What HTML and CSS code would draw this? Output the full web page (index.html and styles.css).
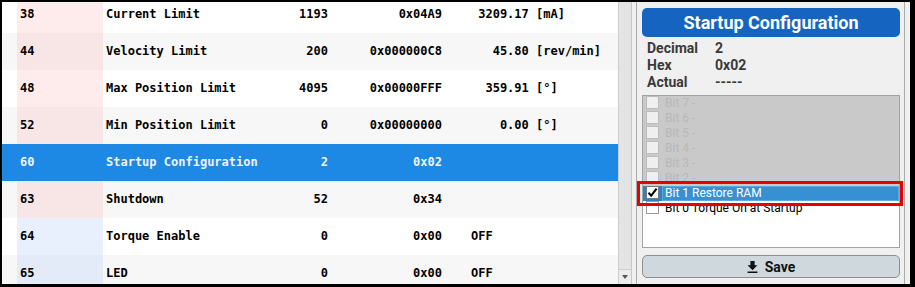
FILE: index.html
```html
<!DOCTYPE html>
<html>
<head>
<meta charset="utf-8">
<link rel="stylesheet" href="styles.css">
</head>
<body>
<div class="frame">
  <div class="table-pane">
    <div class="rows">
      <div class="row"><span></span><span class="addr red">38</span><span class="name">Current Limit</span><span class="dec">1193</span><span class="hex">0x04A9</span><span class="val"> 3209.17 [mA]</span></div>
      <div class="row alt"><span></span><span class="addr red">44</span><span class="name">Velocity Limit</span><span class="dec">200</span><span class="hex">0x000000C8</span><span class="val">   45.80 [rev/min]</span></div>
      <div class="row"><span></span><span class="addr red">48</span><span class="name">Max Position Limit</span><span class="dec">4095</span><span class="hex">0x00000FFF</span><span class="val">  359.91 [°]</span></div>
      <div class="row alt"><span></span><span class="addr red">52</span><span class="name">Min Position Limit</span><span class="dec">0</span><span class="hex">0x00000000</span><span class="val">    0.00 [°]</span></div>
      <div class="row sel"><span></span><span class="addr">60</span><span class="name">Startup Configuration</span><span class="dec">2</span><span class="hex">0x02</span><span class="val"></span></div>
      <div class="row alt"><span></span><span class="addr red">63</span><span class="name">Shutdown</span><span class="dec">52</span><span class="hex">0x34</span><span class="val"></span></div>
      <div class="row"><span></span><span class="addr blue">64</span><span class="name">Torque Enable</span><span class="dec">0</span><span class="hex">0x00</span><span class="val">OFF</span></div>
      <div class="row alt"><span></span><span class="addr blue">65</span><span class="name">LED</span><span class="dec">0</span><span class="hex">0x00</span><span class="val">OFF</span></div>
    </div>
  </div>
  <div class="vscroll">
    <div class="track"></div>
    <div class="arrow-btn"><span class="tri"></span></div>
  </div>
  <div class="gap"></div>
  <div class="panel">
    <div class="title">Startup Configuration</div>
    <div class="info">
      <span>Decimal</span><span>2</span>
      <span>Hex</span><span>0x02</span>
      <span>Actual</span><span>-----</span>
    </div>
    <div class="bits">
      <div class="bit dis"><span class="cb"></span><span class="lbl">Bit 7 -</span></div>
      <div class="bit dis"><span class="cb"></span><span class="lbl">Bit 6 -</span></div>
      <div class="bit dis"><span class="cb"></span><span class="lbl">Bit 5 -</span></div>
      <div class="bit dis"><span class="cb"></span><span class="lbl">Bit 4 -</span></div>
      <div class="bit dis"><span class="cb"></span><span class="lbl">Bit 3 -</span></div>
      <div class="bit dis"><span class="cb"></span><span class="lbl">Bit 2 -</span></div>
      <div class="bit on"><span class="cb checked"><svg width="11" height="11" viewBox="0 0 11 11"><path d="M1.5 5.8 L4.2 8.6 L9.6 1.6" fill="none" stroke="#000" stroke-width="2"/></svg></span><span class="lbl">Bit 1 Restore RAM</span></div>
      <div class="bit"><span class="cb"></span><span class="lbl">Bit 0 Torque On at Startup</span></div>
    </div>
    <button class="save"><svg width="11" height="12" viewBox="5 3 14 17"><path d="M19 9h-4V3H9v6H5l7 7 7-7zM5 18v2h14v-2H5z" fill="#111"/></svg><span>Save</span></button>
    <div class="redbox"></div>
  </div>
</div>
</body>
</html>
```
FILE: styles.css
```css
html, body { margin: 0; padding: 0; }
body { width: 915px; height: 287px; overflow: hidden; background: #000; }

.frame {
  box-sizing: border-box;
  width: 915px;
  height: 287px;
  border-style: solid;
  border-color: #000;
  border-width: 2px 5px 3px 2px;
  background: #f0f0f0;
  display: flex;
}

.table-pane {
  width: 616px;
  flex: none;
  overflow: hidden;
  background: #fff;
}
.rows { margin-top: -6px; }
.row {
  display: grid;
  grid-template-columns: 15px 86px 165px 63px 137px 1fr;
  height: 37px;
  line-height: 37px;
  font-family: "DejaVu Sans Mono", monospace;
  font-weight: bold;
  font-size: 12px;
  color: #000;
  background: #fff;
  white-space: pre;
}
.row.alt { background: #f7f7f7; }
.row span { overflow: hidden; }
.addr { padding-left: 3px; }
.addr.red { background: #fdeceb; }
.row.alt .addr.red { background: #f8e5e5; }
.addr.blue { background: #e9f0fd; }
.row.alt .addr.blue { background: #e3eaf8; }
.name { padding-left: 3px; }
.dec { text-align: right; padding-right: 3px; }
.hex { text-align: right; padding-right: 26px; }
.val { padding-left: 3px; }
.row.sel { background: #1e88e5; color: #eef4fa; }

.vscroll {
  box-sizing: border-box;
  width: 14px;
  flex: none;
  display: flex;
  flex-direction: column;
  border-left: 1px solid #cdcdcd;
  border-right: 1px solid #c6c6c6;
  background: #e4e4e4;
}
.track { flex: 1; }
.arrow-btn {
  height: 14px;
  border-top: 1px solid #cfcfcf;
  background: #ececec;
  display: flex;
  justify-content: center;
  align-items: center;
}
.tri {
  width: 0; height: 0;
  border-left: 3.5px solid transparent;
  border-right: 3.5px solid transparent;
  border-top: 4px solid #555;
}
.gap { width: 4px; flex: none; }

.panel {
  position: relative;
  box-sizing: border-box;
  width: 269px;
  flex: none;
  border-left: 1px solid #a9a9a9;
  border-right: 1px solid #a9a9a9;
  padding: 6px 4px 0 5px;
  font-family: Roboto, "Noto Sans", sans-serif;
  display: flex;
  flex-direction: column;
}
.title {
  height: 29px;
  line-height: 29px;
  background: #1565c0;
  border-radius: 5px;
  color: #fff;
  font-weight: bold;
  font-size: 18px;
  text-align: center;
}
.info {
  margin-top: 3px;
  padding-left: 5px;
  display: grid;
  grid-template-columns: 68px auto;
  line-height: 17px;
  font-size: 14px;
  font-weight: bold;
  color: #3a3a3a;
}
.bits {
  margin-top: 4px;
  height: 153px;
  box-sizing: border-box;
  border: 1px solid #a3a3a3;
  background: #fff;
  overflow: hidden;
}
.bit {
  display: flex;
  align-items: flex-start;
  height: 15px;
  padding-left: 3px;
  font-size: 12px;
  line-height: 15px;
  color: #000;
  white-space: nowrap;
}
.bit.dis { background: #c9c9c9; color: #b8b8b8; }
.cb {
  box-sizing: border-box;
  width: 13px;
  height: 13px;
  flex: none;
  margin-right: 6px;
  background: #fff;
  border: 1px solid #9a9a9a;
  display: flex;
  align-items: center;
  justify-content: center;
}
.bit.dis .cb { background: #efefef; border-color: #bcbcbc; }
.bit.on { background: #2d82c6; color: #fff; }
.bit.on .cb { border-color: #7a7a7a; }
.bit.on .lbl {
  flex: 1;
  box-sizing: border-box;
  height: 15px;
  background: #3591d4;
  border: 1px solid #5da9df;
  line-height: 13px;
  padding-left: 2px;
  margin-left: -3px;
}
.save {
  margin-top: 7px;
  height: 23px;
  box-sizing: border-box;
  border: 1px solid #8e8e8e;
  border-radius: 5px;
  background: #cfd8dc;
  display: flex;
  align-items: center;
  justify-content: center;
  gap: 7px;
  font-family: Roboto, "Noto Sans", sans-serif;
  font-weight: bold;
  font-size: 14px;
  color: #111;
  padding: 0;
}
.redbox {
  position: absolute;
  left: 0;
  top: 179px;
  width: 266px;
  height: 25px;
  box-sizing: border-box;
  border: 3px solid #e60000;
}
```
